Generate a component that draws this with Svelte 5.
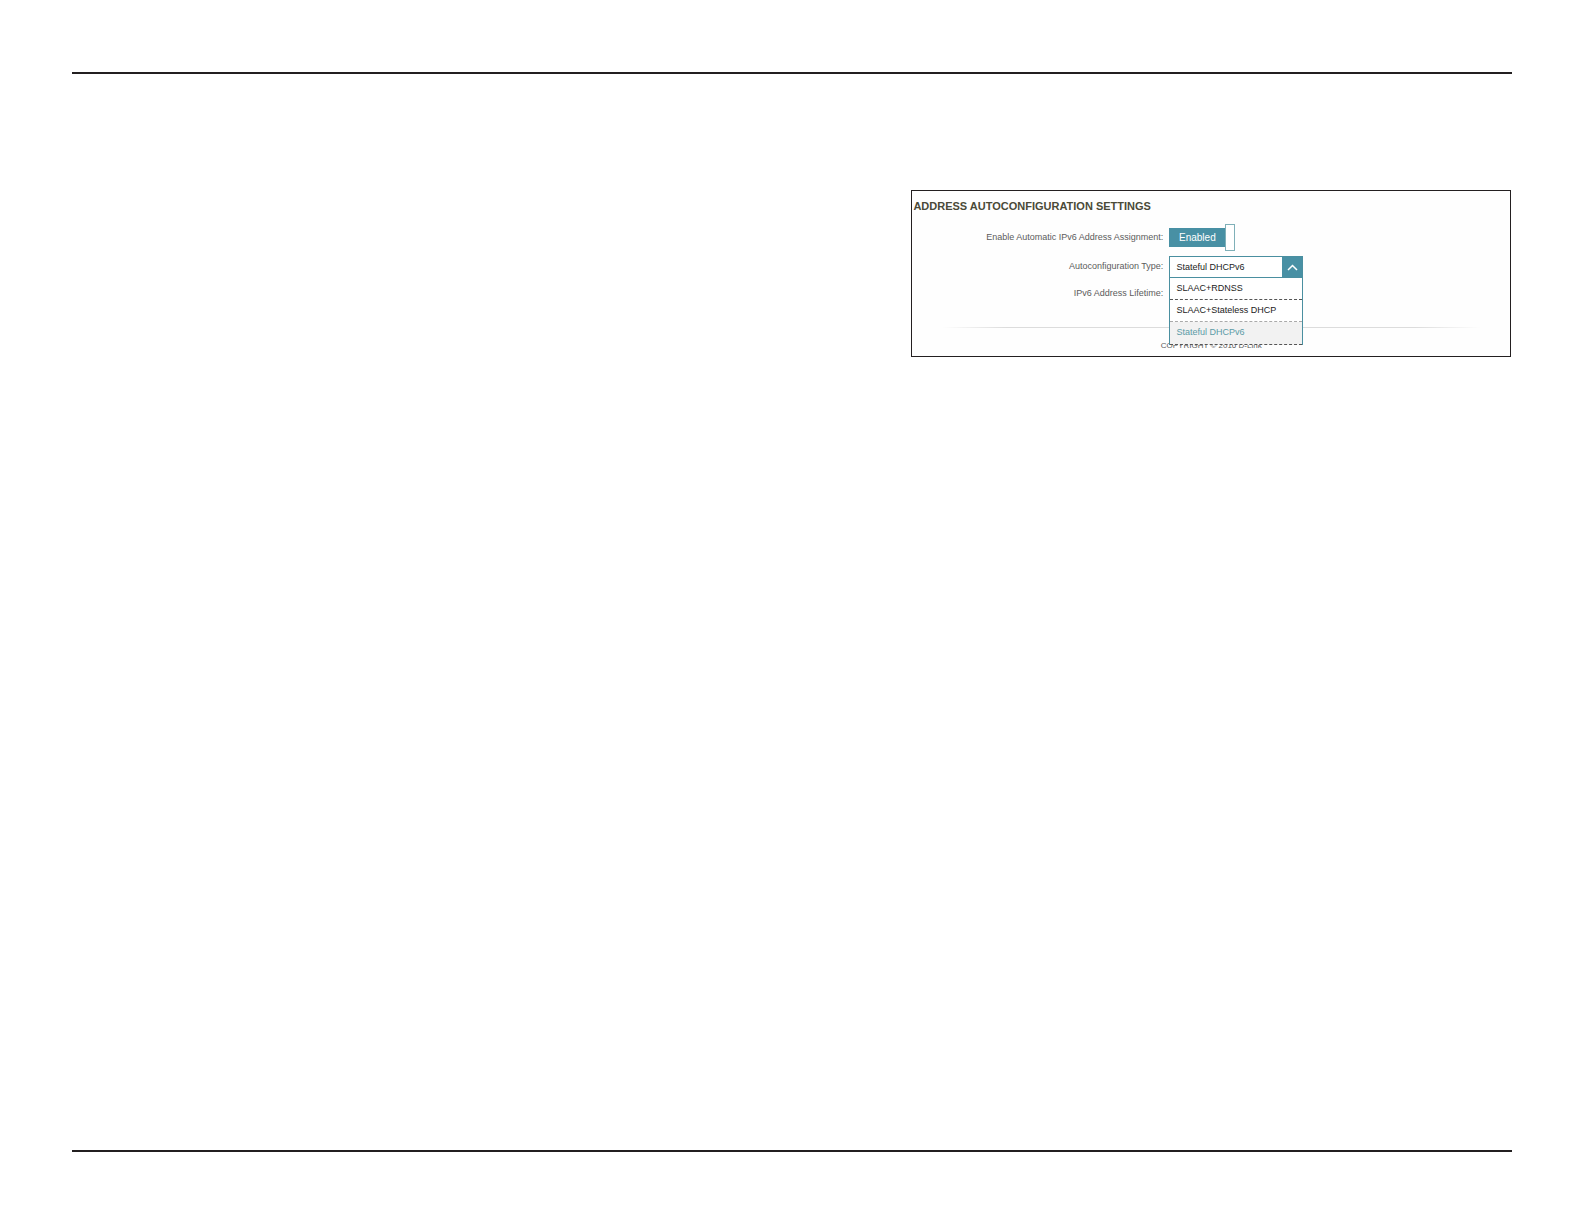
<script>
  const options = ['SLAAC+RDNSS', 'SLAAC+Stateless DHCP', 'Stateful DHCPv6'];
  let enabled = $state(true);
  let open = $state(true);
  let selected = $state('Stateful DHCPv6');

  function choose(option) {
    selected = option;
    open = false;
  }
</script>

<main class="page">
  <section class="panel" aria-labelledby="settings-title">
    <h1 id="settings-title">ADDRESS AUTOCONFIGURATION SETTINGS</h1>

    <div class="row first">
      <label for="assign">Enable Automatic IPv6 Address Assignment:</label>
      <button
        id="assign"
        class="toggle"
        type="button"
        role="switch"
        aria-checked={enabled}
        onclick={() => (enabled = !enabled)}
      >
        <span class="state">{enabled ? 'Enabled' : 'Disabled'}</span>
        <span class="handle"></span>
      </button>
    </div>

    <div class="row second">
      <label for="type">Autoconfiguration Type:</label>
      <div class="dropdown">
        <button
          id="type"
          class="current"
          type="button"
          aria-haspopup="listbox"
          aria-expanded={open}
          onclick={() => (open = !open)}
        >
          <span class="value">{selected}</span>
          <span class="arrow">
            <svg viewBox="0 0 20 20" aria-hidden="true">
              <path d="M6 13 L10.5 8.5 L15 13" />
            </svg>
          </span>
        </button>
        {#if open}
          <div class="menu" role="listbox" aria-label="Autoconfiguration Type">
            {#each options as option}
              <button
                type="button"
                role="option"
                class="option"
                class:chosen={option === selected}
                aria-selected={option === selected}
                onclick={() => choose(option)}>{option}</button
              >
            {/each}
          </div>
        {/if}
      </div>
    </div>

    <div class="row third">
      <span class="name">IPv6 Address Lifetime:</span>
    </div>

    <hr />
    <footer>COPYRIGHT © 2016 D-Link</footer>
  </section>
</main>

<style>
  :global(body) {
    margin: 0;
    background: #fff;
  }

  .page {
    box-sizing: border-box;
    display: grid;
    grid-template-columns: 7fr 5fr;
    align-items: start;
    min-height: calc(100vh - 144px);
    margin: 72px;
    padding: 116px 1px 0 0;
    border-top: 2px solid #231f20;
    border-bottom: 2px solid #231f20;
    font-family: 'Liberation Sans', Arial, sans-serif;
    font-size: 9px;
    line-height: 12px;
    color: #5c5c5c;
  }

  .panel {
    grid-column: 2;
    min-width: 420px;
    padding: 7px 0 4px;
    border: 1px solid #231f20;
    background: #fefefe;
  }

  h1 {
    margin: 0 0 0 1px;
    font-size: 11px;
    line-height: 16px;
    font-weight: bold;
    color: #4a4a38;
  }

  .row {
    display: grid;
    grid-template-columns: 42% 1fr;
    column-gap: 6px;
    align-items: center;
  }

  .first {
    height: 27px;
    margin-top: 10px;
  }

  .second {
    height: 22px;
    margin-top: 5px;
  }

  .third {
    height: 20px;
    margin-top: 6px;
  }

  label,
  .name {
    padding-bottom: 2px;
    text-align: right;
    white-space: nowrap;
  }

  button {
    padding: 0;
    border: 0;
    border-radius: 0;
    font: inherit;
    text-align: left;
    cursor: pointer;
  }

  .toggle {
    display: flex;
    align-items: center;
    width: 66px;
    background: none;
  }

  .state {
    flex: 1;
    font-size: 10px;
    line-height: 19px;
    text-align: center;
    color: #fff;
    background: #4890a4;
  }

  .handle {
    box-sizing: border-box;
    width: 10px;
    height: 27px;
    border: 1px solid #7fb0b8;
    background: #fff;
  }

  .dropdown {
    position: relative;
    width: 134px;
    color: #222;
  }

  .current {
    box-sizing: border-box;
    display: flex;
    align-items: stretch;
    width: 100%;
    height: 22px;
    border: 1px solid #4a8fa0;
    color: inherit;
    background: #fff;
  }

  .value {
    flex: 1;
    padding-left: 6px;
    line-height: 20px;
  }

  .arrow {
    width: 20px;
    background: #4890a4;
  }

  svg {
    display: block;
    width: 20px;
    height: 20px;
    fill: none;
    stroke: #fff;
    stroke-width: 1.5;
  }

  .menu {
    position: absolute;
    top: 100%;
    left: 0;
    box-sizing: border-box;
    width: 100%;
    border: 1px solid #4a8fa0;
    border-width: 0 1px;
  }

  .option {
    box-sizing: border-box;
    display: block;
    width: 100%;
    height: 22px;
    padding: 0 0 2px 6px;
    border-bottom: 1px dashed #555;
    color: inherit;
    background: #fff;
  }

  .option:nth-child(2) {
    border-bottom-color: #aaa;
  }

  .option:last-child {
    height: 23px;
  }

  .chosen {
    color: #5b9ba6;
    background: #f2f2f2;
  }

  hr {
    height: 1px;
    margin: 23px 30px 0;
    border: 0;
    background: linear-gradient(to right, transparent, #dcdcdc 12%, #dcdcdc 88%, transparent);
  }

  footer {
    margin-top: 12px;
    text-align: center;
    font-size: 8px;
    line-height: 12px;
  }
</style>
